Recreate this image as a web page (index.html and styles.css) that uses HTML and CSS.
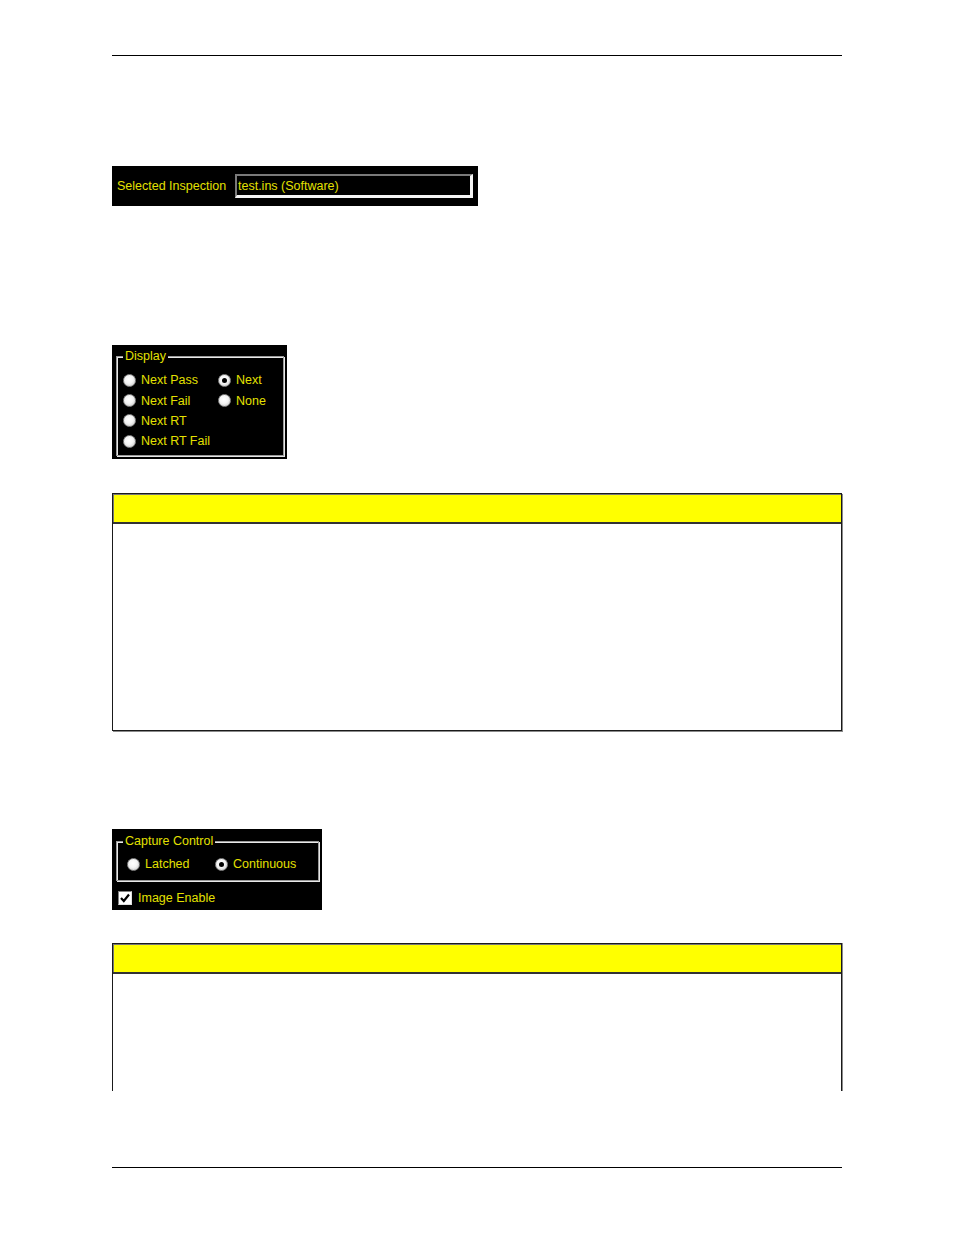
FILE: index.html
```html
<!DOCTYPE html>
<html>
<head>
<meta charset="utf-8">
<link rel="stylesheet" href="styles.css">
</head>
<body>
<div class="page">
  <div class="rule rule-top"></div>

  <div class="panel inspect">
    <span class="ytext label">Selected Inspection</span>
    <div class="field"><span class="ytext">test.ins (Software)</span></div>
  </div>

  <div class="panel display">
    <fieldset class="group">
      <legend class="ytext">Display</legend>
      <div class="radio-grid">
        <div class="opt"><span class="radio"></span><span class="ytext">Next Pass</span></div>
        <div class="opt"><span class="radio on"></span><span class="ytext">Next</span></div>
        <div class="opt"><span class="radio"></span><span class="ytext">Next Fail</span></div>
        <div class="opt"><span class="radio"></span><span class="ytext">None</span></div>
        <div class="opt"><span class="radio"></span><span class="ytext">Next RT</span></div>
        <div class="opt"></div>
        <div class="opt"><span class="radio"></span><span class="ytext">Next RT Fail</span></div>
        <div class="opt"></div>
      </div>
    </fieldset>
  </div>

  <div class="tbl tbl1">
    <div class="tbl-head"></div>
    <div class="tbl-body"></div>
  </div>

  <div class="panel capture">
    <fieldset class="group cgroup">
      <legend class="ytext">Capture Control</legend>
      <div class="radio-row">
        <div class="opt o-latched"><span class="radio"></span><span class="ytext">Latched</span></div>
        <div class="opt"><span class="radio on"></span><span class="ytext">Continuous</span></div>
      </div>
    </fieldset>
    <div class="opt check-row"><span class="check"><svg width="12" height="12" viewBox="0 0 12 12"><path d="M2 6 L4.8 9 L10 2.5" fill="none" stroke="#000" stroke-width="2.2"/></svg></span><span class="ytext">Image Enable</span></div>
  </div>

  <div class="tbl tbl2">
    <div class="tbl-head"></div>
    <div class="tbl-body"></div>
  </div>

  <div class="rule rule-bottom"></div>
</div>
</body>
</html>
```

FILE: styles.css
```css
html, body {
  margin: 0;
  padding: 0;
  background: #fff;
}
.page {
  width: 730px;
  margin-left: 112px;
  display: flex;
  flex-direction: column;
  align-items: flex-start;
  font-family: "Liberation Sans", Arial, sans-serif;
}
.rule {
  width: 730px;
  height: 0;
  border-top: 1.5px solid #000;
}
.rule-top { margin-top: 55px; }
.rule-bottom { margin-top: 76px; }

.ytext {
  color: #e4e000;
  font-size: 12.5px;
  line-height: 14px;
  white-space: nowrap;
}

.panel {
  background: #000;
  box-sizing: border-box;
}

/* Selected inspection */
.inspect {
  margin-top: 110px;
  width: 366px;
  height: 40px;
  display: flex;
  align-items: center;
  padding-left: 5px;
  gap: 6px;
}
.label {
  flex: none;
  width: 112px;
}
.field {
  box-sizing: border-box;
  width: 238px;
  height: 24px;
  border-style: solid;
  border-width: 2px 3px 3px 2px;
  border-color: #7a7a7a #f4f4f4 #f4f4f4 #7a7a7a;
  display: flex;
  align-items: center;
  padding-left: 1px;
  padding-top: 1px;
}

/* group boxes */
.group {
  margin: 0;
  padding: 0;
  border: 1px solid #9a9a9a;
  box-shadow: 1px 1px 0 #e8e8e8, inset 1px 1px 0 #e8e8e8;
  min-width: 0;
}
.group legend {
  padding: 0 2px;
  margin-left: 6px;
  background: #000;
}

.display {
  margin-top: 139px;
  width: 175px;
  height: 114px;
  padding: 4px 3px 0 4px;
}
.display .group {
  width: 168px;
  height: 107px;
  box-sizing: border-box;
}
.radio-grid {
  display: grid;
  grid-template-columns: 95px 1fr;
  grid-auto-rows: 20.4px;
  padding: 7px 0 0 6px;
}
.opt {
  display: flex;
  align-items: center;
  gap: 5px;
}
.radio {
  box-sizing: border-box;
  width: 13px;
  height: 13px;
  border-radius: 50%;
  background: radial-gradient(circle at 45% 40%, #ffffff 0%, #f4f4f4 45%, #bdbdbd 100%);
  border: 1px solid #8a8a8a;
  display: flex;
  align-items: center;
  justify-content: center;
  flex: none;
}
.radio.on::after {
  content: "";
  width: 5px;
  height: 5px;
  border-radius: 50%;
  background: #000;
}

/* tables */
.tbl {
  width: 730px;
  box-sizing: border-box;
  border: 1px solid #1a1a1a;
  box-shadow: 1px 1px 0 #8a8a8a;
  display: flex;
  flex-direction: column;
}
.tbl-head {
  height: 28px;
  background: #ffff00;
  border-bottom: 2px solid #333;
  box-shadow: inset 1px 1px 0 #777;
}
.tbl-body {
  background: #fff;
  flex: 1;
}
.tbl1 {
  margin-top: 34px;
  height: 238px;
}
.tbl2 {
  margin-top: 33px;
  height: 148px;
  border-bottom: none;
  box-shadow: 1px 0 0 #8a8a8a;
}

/* capture control */
.capture {
  margin-top: 98px;
  width: 210px;
  height: 81px;
  padding: 5px 3px 0 4px;
}
.cgroup {
  width: 203px;
  height: 47px;
  box-sizing: border-box;
}
.radio-row {
  display: flex;
  padding: 6px 0 0 10px;
  height: 20px;
  align-items: center;
}
.o-latched { width: 88px; }
.check-row {
  margin-top: 10px;
  padding-left: 2px;
  gap: 6px;
}
.check {
  box-sizing: border-box;
  width: 14px;
  height: 14px;
  background: #fff;
  border-style: solid;
  border-width: 1px;
  border-color: #808080 #e0e0e0 #e0e0e0 #808080;
  display: flex;
  align-items: center;
  justify-content: center;
}
.check svg { display: block; }
```
